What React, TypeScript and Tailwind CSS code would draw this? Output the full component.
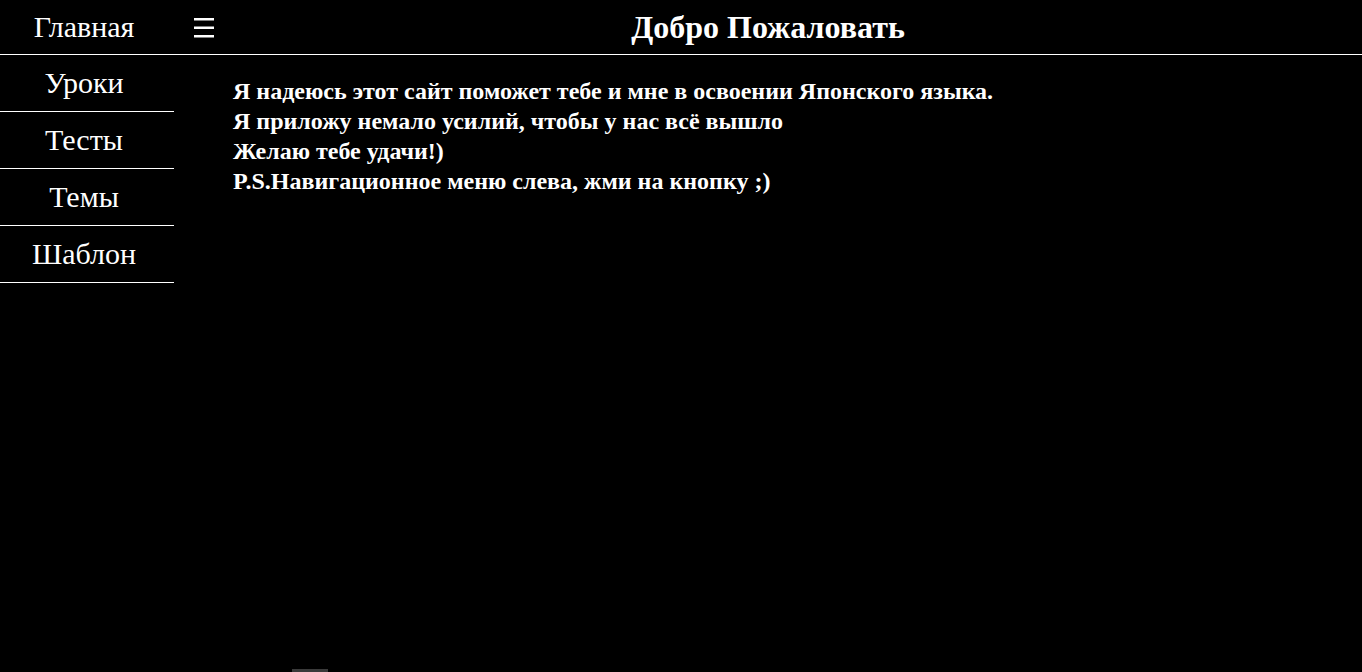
import React from "react";

const serif = { fontFamily: '"Liberation Serif", "Times New Roman", serif' };

const menu = ["Уроки", "Тесты", "Темы", "Шаблон"];

const lines = [
  "Я надеюсь этот сайт поможет тебе и мне в освоении Японского языка.",
  "Я приложу немало усилий, чтобы у нас всё вышло",
  "Желаю тебе удачи!)",
  "P.S.Навигационное меню слева, жми на кнопку ;)",
];

export default function App() {
  return (
    <div
      className="min-h-screen h-[672px] bg-black text-white overflow-hidden relative font-['Liberation_Serif',serif]"
      style={serif}
    >
      {/* Header */}
      <header className="flex h-[55px] border-b border-white">
        <div className="w-[174px] flex items-center justify-center text-[30px] leading-none pb-[1px] pr-[6px]">
          Главная
        </div>
        <div className="flex-1 relative flex items-center justify-center">
          <button className="absolute left-[20px] top-[18px] w-[20px] h-[20px]">
            <svg width="20" height="20" viewBox="0 0 20 20">
              <rect x="0" y="0" width="20" height="2.5" fill="white" />
              <rect x="0" y="8.5" width="20" height="2.5" fill="white" />
              <rect x="0" y="17" width="20" height="2.5" fill="white" />
            </svg>
          </button>
          <h1 className="text-[32px] font-bold leading-none">Добро Пожаловать</h1>
        </div>
      </header>

      <div className="flex">
        {/* Sidebar */}
        <nav className="w-[174px] flex flex-col">
          {menu.map((item) => (
            <a
              key={item}
              href="#"
              className="h-[57px] flex items-center justify-center border-b border-white text-[30px] leading-none pr-[6px]"
            >
              {item}
            </a>
          ))}
        </nav>

        {/* Content */}
        <main className="flex-1 pl-[59px] pt-[21px]">
          {lines.map((l) => (
            <p key={l} className="text-[24px] font-bold leading-[30px]">
              {l}
            </p>
          ))}
        </main>
      </div>

      <div className="absolute left-[292px] bottom-0 w-[36px] h-[3px] bg-[#3a3a3a]" />
    </div>
  );
}
